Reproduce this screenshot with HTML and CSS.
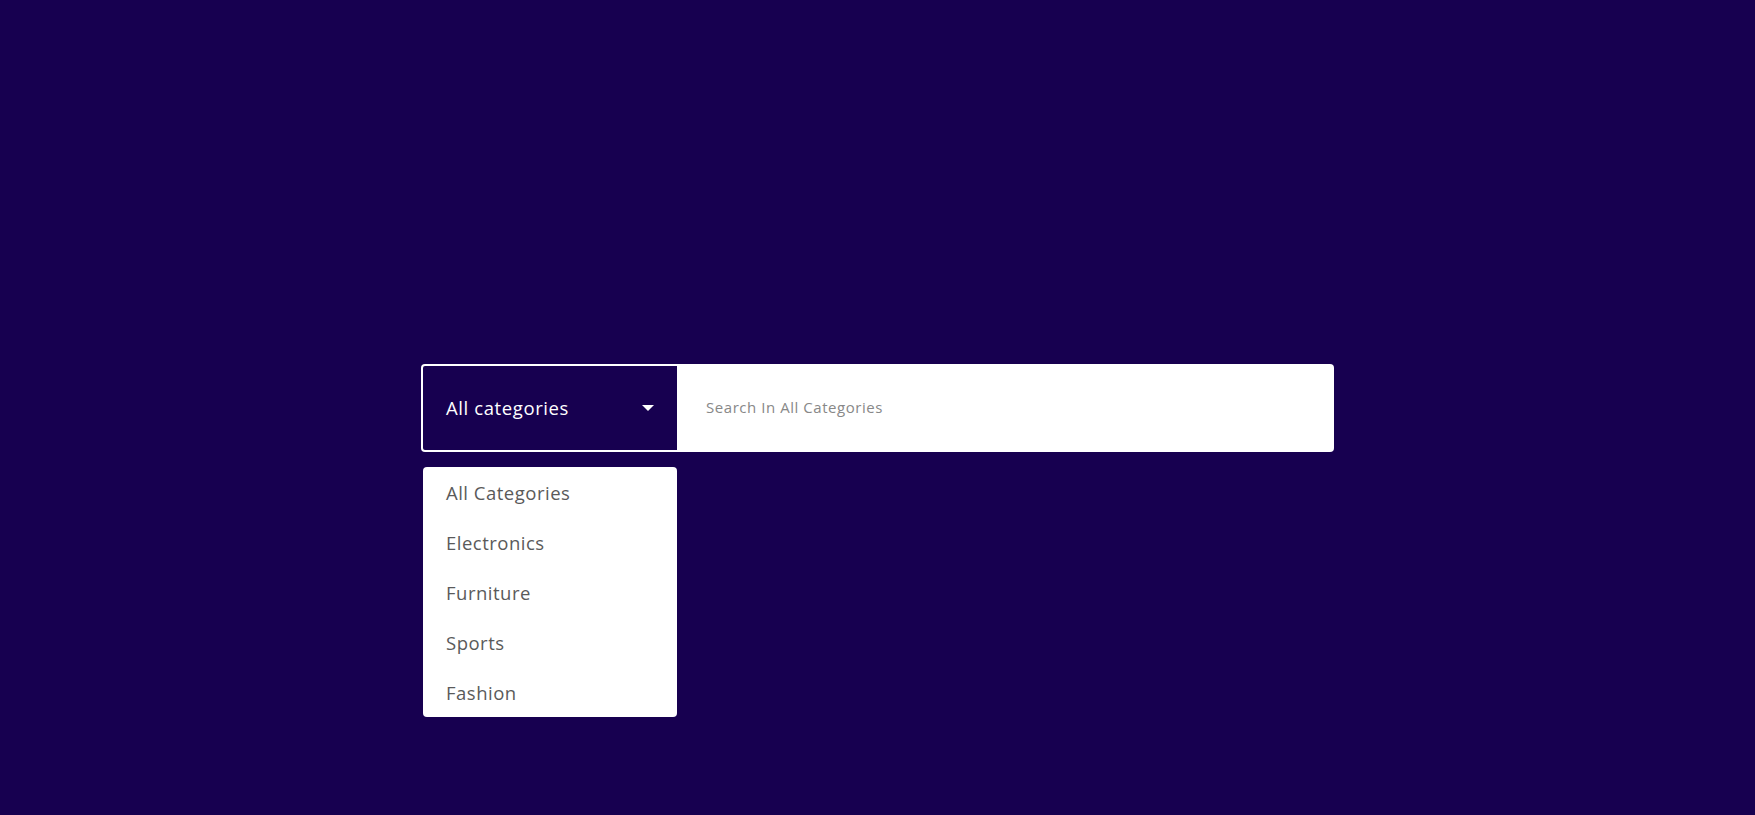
FILE: index.html
```html
<!DOCTYPE html>
<html>
<head>
<meta charset="utf-8">
<link rel="stylesheet" href="styles.css">
</head>
<body>
<div class="page">
  <div class="search">
    <div class="search-bar">
      <div class="select">
        <span class="select-label">All categories</span>
        <svg class="caret" width="12" height="6" viewBox="0 0 12 6"><path d="M0 0 L12 0 L6 6 Z" fill="#fff"/></svg>
      </div>
      <div class="input">Search In All Categories</div>
    </div>
    <ul class="menu">
      <li>All Categories</li>
      <li>Electronics</li>
      <li>Furniture</li>
      <li>Sports</li>
      <li>Fashion</li>
    </ul>
  </div>
</div>
</body>
</html>
```
FILE: styles.css
```css
html, body {
  margin: 0;
  padding: 0;
  background: #170050;
  height: 100%;
}
body {
  font-family: "Open Sans", "Noto Sans", sans-serif;
}
.page {
  display: flex;
  justify-content: center;
  padding-top: 364px;
}
.search {
  position: relative;
  width: 913px;
}
.search-bar {
  display: flex;
  background: #fff;
  border-radius: 4px;
  padding: 2px 0 2px 2px;
  height: 84px;
}
.select {
  width: 254px;
  background: #170050;
  display: flex;
  align-items: center;
  justify-content: space-between;
  padding: 0 23px 2px 23px;
  box-sizing: border-box;
  border-radius: 2px 0 0 2px;
}
.select-label {
  color: #fff;
  font-size: 18.5px;
  letter-spacing: 0.6px;
}
.caret {
  display: block;
  margin-top: 2px;
}
.input {
  flex: 1;
  display: flex;
  align-items: center;
  padding-left: 29px;
  padding-bottom: 2px;
  color: #888;
  font-size: 15px;
  letter-spacing: 0.55px;
}
.menu {
  position: absolute;
  top: 103px;
  left: 2px;
  width: 254px;
  margin: 0;
  padding: 0;
  list-style: none;
  background: #fff;
  border-radius: 4px;
  overflow: hidden;
}
.menu li {
  height: 50px;
  display: flex;
  align-items: center;
  padding: 0 23px;
  color: #5a5a5a;
  font-size: 18.5px;
  letter-spacing: 0.5px;
  box-sizing: border-box;
}
```
